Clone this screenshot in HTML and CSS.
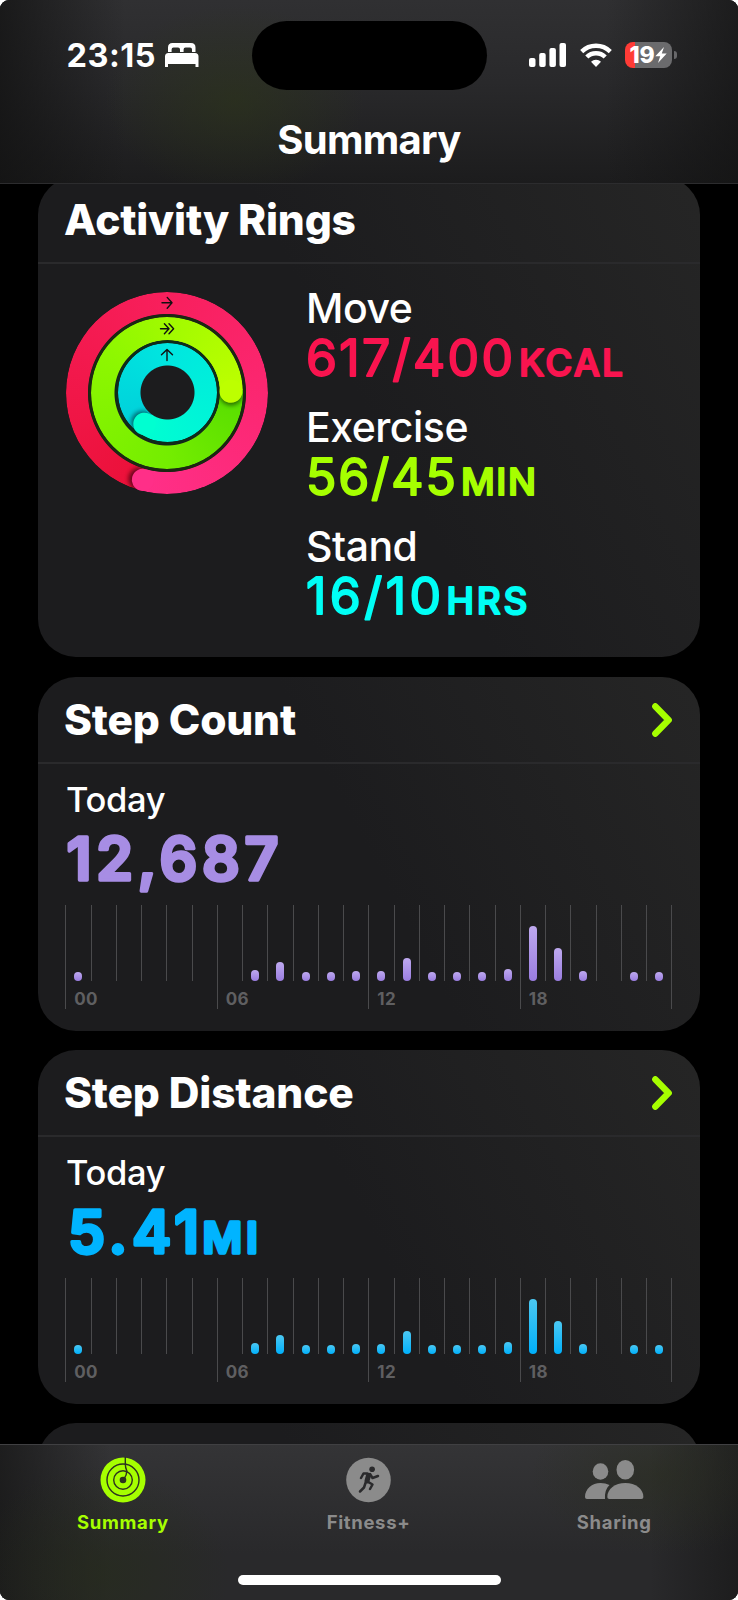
FILE: index.html
```html
<!DOCTYPE html>
<html lang="en">
<head>
<meta charset="utf-8">
<title>Summary</title>
<link rel="stylesheet" href="styles.css">
</head>
<body>
<div class="phone">
  <header class="top">
    <div class="status">
      <div class="status-left">
        <span class="clock">23:15</span>
        <svg class="bed" width="34" height="24" viewBox="0 0 34 24"><path fill="#fff" d="M3 9V4.500Q3 0 7.500 0H26Q30.500 0 30.500 4.500V9H27V6.500Q27 4.600 25 4.600H20.500Q18.600 4.600 18.600 6.500V9H15V6.500Q15 4.600 13 4.600H8.500Q6.600 4.600 6.600 6.500V9ZM0 13.500Q0 10 3.500 10H30Q33.500 10 33.500 13.500V24H30.500V21H3V24H0Z"/></svg>
      </div>
      <div class="island"></div>
      <div class="status-right">
        <svg width="37" height="24" viewBox="0 0 37 24" fill="#fff"><rect y="15" width="6.500" height="9" rx="2"/><rect x="10.200" y="10" width="6.500" height="14" rx="2"/><rect x="20.400" y="5" width="6.500" height="19" rx="2"/><rect x="30.500" width="6.500" height="24" rx="2"/></svg>
        <svg width="32" height="24" viewBox="0 0 32 24"><g fill="none" stroke="#fff" stroke-width="4.400"><path d="M1.700 8.600A20.500 20.500 0 0 1 30.300 8.600"/><path d="M6.800 14A13 13 0 0 1 25.200 14"/></g><path fill="#fff" d="M11 18.700A7.200 7.200 0 0 1 21 18.700L16 24Z"/></svg>
        <div class="battery"><span class="charge">19</span><svg class="bolt" width="12" height="16" viewBox="0 0 12 16"><path fill="#fff" d="M9 0 .3 9.300H5.200L3 16 11.700 6.600H6.800Z"/></svg></div>
      </div>
    </div>
    <h1 class="title">Summary</h1>
  </header>

  <main class="cards">
    <section class="card rings-card">
      <h2 class="card-head">Activity Rings</h2>
      <div class="rings-body">
        <div class="rings">
          <div class="ring move"></div>
          <div class="ring exercise"></div>
          <div class="ring stand"></div>
          <svg class="ring-ends" width="204" height="204" viewBox="-102 -102 204 204">
            <defs>
              <filter id="soft" x="-50%" y="-50%" width="200%" height="200%"><feGaussianBlur stdDeviation="2.200"/></filter>
              <clipPath id="c1"><path d="M0-101.300A101.300 101.300 0 0 1 101.300 0H79A79 79 0 0 0 0-79Z"/></clipPath>
              <clipPath id="c2"><path d="M0-75.500A75.500 75.500 0 0 1 75.500 0H52.500A52.500 52.500 0 0 0 0-52.500Z"/></clipPath>
              <clipPath id="c3"><path d="M0-49.500A49.500 49.500 0 0 1 49.500 0H27A27 27 0 0 0 0-27Z"/></clipPath>
            </defs>
            <g transform="rotate(195.500)"><g clip-path="url(#c1)"><circle cx="3" cy="-90.100" r="11.500" fill="#300010" opacity=".7" filter="url(#soft)"/></g><circle cy="-90.150" r="11.150" fill="#ff2f88"/></g>
            <g transform="rotate(88.500)"><g clip-path="url(#c2)"><circle cx="2.500" cy="-64" r="11.500" fill="#103000" opacity=".65" filter="url(#soft)"/></g><circle cy="-64" r="11.500" fill="#bdff00"/></g>
            <g transform="rotate(216)"><g clip-path="url(#c3)"><circle cx="2.500" cy="-38.200" r="11.500" fill="#003038" opacity=".65" filter="url(#soft)"/></g><circle cy="-38.250" r="11.250" fill="#00ffd1"/></g>
            <g fill="none" stroke="#101010" stroke-width="1.400" stroke-linecap="round" stroke-linejoin="round">
              <path d="M-5-90.200H5M.2-95.600 5-90.200.2-84.800"/>
              <path d="M-6.500-64.200H1.800M-2.600-69.200 2-64.200-2.600-59.200M2-69.200 6.600-64.200 2-59.200"/>
              <path d="M0-32.500V-43.600M-5.500-38.200 0-43.600 5.500-38.200"/>
            </g>
          </svg>
        </div>
        <div class="goals">
          <div class="goal"><div class="goal-name">Move</div>
            <svg class="num" width="340" height="52"><g fill="#f9144f" stroke="#f9144f"><text x="0" y="41" textLength="207">617/400</text><text class="unit" x="213" y="41" textLength="104">KCAL</text></g></svg></div>
          <div class="goal"><div class="goal-name">Exercise</div>
            <svg class="num" width="340" height="52"><g fill="#a6ff00" stroke="#a6ff00"><text x="0" y="41" textLength="150">56/45</text><text class="unit" x="155" y="41" textLength="75">MIN</text></g></svg></div>
          <div class="goal"><div class="goal-name">Stand</div>
            <svg class="num" width="340" height="52"><g fill="#00fff6" stroke="#00fff6"><text x="0" y="41" textLength="135">16/10</text><text class="unit" x="140.500" y="41" textLength="81">HRS</text></g></svg></div>
        </div>
      </div>
    </section>

    <section class="card">
      <h2 class="card-head"><span>Step Count</span><svg width="20" height="34" viewBox="0 0 20 34"><path class="chev" d="M3.400 3.400 16.600 17 3.400 30.600"/></svg></h2>
      <div class="metric">
        <div class="today">Today</div>
        <svg class="big" width="400" height="66"><text x="1.500" y="52" fill="#a78de4" stroke="#a78de4" textLength="212">12,687</text></svg>
        <div class="chart steps"></div>
      </div>
    </section>

    <section class="card">
      <h2 class="card-head"><span>Step Distance</span><svg width="20" height="34" viewBox="0 0 20 34"><path class="chev" d="M3.400 3.400 16.600 17 3.400 30.600"/></svg></h2>
      <div class="metric">
        <div class="today">Today</div>
        <svg class="big" width="400" height="66"><g fill="#00b4ff" stroke="#00b4ff"><text x="3" y="52" textLength="131">5.41</text><text class="big-unit" x="137.500" y="52" textLength="55.500">MI</text></g></svg>
        <div class="chart distance"></div>
      </div>
    </section>

    <section class="card next-card"></section>
  </main>

  <nav class="tabs">
    <div class="tab-row">
      <a class="tab active">
        <svg width="46" height="46" viewBox="-23 -23 46 46"><circle r="22.500" fill="#a6ff00"/><g fill="none" stroke="#2c3220" stroke-width="1.400"><circle r="16"/><circle r="9.300"/><path d="M2.300-23V-16Q2.300-12.500 3.800-9.300Q3.800-5 1-1"/></g><circle r="3.300" fill="#2c3220"/></svg>
        <span>Summary</span>
      </a>
      <a class="tab">
        <svg width="46" height="46" viewBox="-22.500 -23 46 46"><circle r="22.300" fill="#8b8b8b"/><circle cx="3.600" cy="-10.800" r="2.800" fill="#2a2a2c"/><g fill="none" stroke="#2a2a2c" stroke-linecap="round" stroke-linejoin="round"><path stroke-width="5" d="M0-4.500-1.500 1"/><path stroke-width="2.500" d="M-1-6.500H-5L-7.500-2M1.500-6 4-2 9.500-4M-1 1.500 4 4.500 1.500 9M-3 3-4.500 7.500-8.500 11.500"/></g></svg>
        <span>Fitness+</span>
      </a>
      <a class="tab">
        <svg width="60" height="46" viewBox="0 0 60 46" fill="#8b8b8b"><ellipse cx="16.500" cy="14.500" rx="7.800" ry="8.300"/><ellipse cx="41.300" cy="12.800" rx="8.800" ry="9.800"/><path d="M25.500 28C22 31.500 20.500 36 21 42H3Q1 42 1 40C1 32 8 26 16.500 26Q21.500 26 25.500 28Z"/><path d="M23.300 40C23.300 32 31 26 41.300 26S59.400 32 59.400 40Q59.400 42 57.400 42H25.300Q23.300 42 23.300 40Z"/></svg>
        <span>Sharing</span>
      </a>
    </div>
    <div class="home"></div>
  </nav>
</div>
<script src="chart.js"></script>
</body>
</html>
```
FILE: styles.css
```css
* { box-sizing: border-box; }
html { background: #fff; }
body { margin: 0; font-family: Inter, "Liberation Sans", sans-serif; color: #fff; }
.phone { width: 738px; height: 1600px; display: flex; flex-direction: column; background: #000; border-radius: 9px; overflow: hidden; }

.top {
  height: 184px; flex: none; border-bottom: 1px solid #2c2c2e;
  background:
    radial-gradient(ellipse 130px 95px at 235px 100px, rgba(45,54,24,.55), rgba(45,54,24,0)),
    linear-gradient(90deg, rgba(18,18,18,.75), rgba(18,18,18,0) 17%, rgba(18,18,18,0) 82%, rgba(18,18,18,.65)),
    linear-gradient(#303032, #29292b 45%, #1c1c1d);
}
.status { display: grid; grid-template-columns: 252px 235px 1fr; padding-top: 21px; height: 91px; }
.status-left { display: flex; gap: 9px; padding: 22px 0 0 66.500px; }
.clock { font-size: 32.500px; font-weight: 750; line-height: 25px; letter-spacing: .5px; width: 89.500px; white-space: nowrap; }
.bed { flex: none; }
.island { height: 69px; background: #000; border-radius: 35px; }
.status-right { display: flex; gap: 14px; padding: 22px 0 0 42px; }
.battery { position: relative; width: 47px; height: 26px; margin-top: -1px; margin-left: -1px; border-radius: 8px; background: linear-gradient(90deg, #ff3b36 10px, #6b6b6d 10px); display: flex; align-items: center; justify-content: center; gap: 1px; }
.battery::after { content: ""; position: absolute; left: 49px; top: 9px; width: 3px; height: 8px; border-radius: 0 4px 4px 0; background: #68686a; }
.charge { font-size: 23px; font-weight: 800; letter-spacing: -.3px; line-height: 26px; }
.bolt { flex: none; }
.title { margin: 25px 0 0; text-align: center; font-size: 40px; line-height: 48px; font-weight: 750; letter-spacing: -.7px; }

.cards { height: 1260px; flex: none; overflow: hidden; padding: 0 38px; }
.card { height: 353.600px; margin-bottom: 19.600px; border-radius: 38px; background: linear-gradient(62deg, #1c1c1e 50%, #252525 98%); overflow: hidden; }
.rings-card { height: 480.600px; margin-top: -7.200px; }
.card-head { height: 87px; margin: 0; padding: 0 28px 0 26px; display: flex; align-items: center; justify-content: space-between; border-bottom: 2px solid #2a2a2c; font-size: 42.500px; font-weight: 800; letter-spacing: -.2px; }
.chev { fill: none; stroke: #a6ff00; stroke-width: 6.500; stroke-linecap: round; stroke-linejoin: round; }

.rings-body { display: flex; padding: 27px 0 0 27px; }
.rings { width: 204px; height: 204px; display: grid; flex: none; place-items: center; }
.ring, .ring-ends { grid-area: 1 / 1; }
.ring-ends { z-index: 1; }
.ring { border-radius: 50%; }
.move { width: 202.600px; height: 202.600px; background: conic-gradient(from 195deg, #eb1038, #f81f5c 45%, #ff2f88); -webkit-mask: radial-gradient(circle, transparent 78.500px, #000 79.500px); mask: radial-gradient(circle, transparent 78.500px, #000 79.500px); }
.exercise { width: 158px; height: 158px; border: 3.500px solid #1b2812; background: conic-gradient(from 88deg, #57dd00, #74ed00 25%, #8ef700 60%, #bdff00) border-box; background-clip: padding-box; -webkit-mask: radial-gradient(circle, transparent 52px, #000 53px); mask: radial-gradient(circle, transparent 52px, #000 53px); }
.stand { width: 105px; height: 105px; border: 3px solid #0e2c1a; background: conic-gradient(from 216deg, #00cfda, #00e6e0 40%, #00ffd1); background-clip: padding-box; -webkit-mask: radial-gradient(circle, transparent 26.500px, #000 27.500px); mask: radial-gradient(circle, transparent 26.500px, #000 27.500px); }
.goals { margin: -4px 0 0 37px; }
.goal { height: 119.200px; }
.goal-name { font-size: 41px; line-height: 43px; font-weight: 550; letter-spacing: -.5px; margin-bottom: 5px; }
.num { display: block; font-size: 50px; font-weight: 400; overflow: visible; }
.num text, .big text { stroke-linejoin: round; stroke-width: 1.900; }
.num .unit { font-size: 37px; font-weight: 500; }

.metric { padding: 16px 0 0 27px; }
.today { font-size: 34.500px; line-height: 40px; font-weight: 500; letter-spacing: -.3px; padding-left: 1px; }
.big { display: block; margin-top: 8px; font-size: 59px; font-weight: 600; overflow: visible; }
.big text { stroke-width: 3.400; }
.big .big-unit { font-size: 43px; font-weight: 600; }

.chart { display: grid; grid-template-columns: repeat(24, 25.250px) 2px; height: 104px; margin: 11px 0 0 .3px; }
.hour { height: 76px; border-left: 1px solid #4a4a4c; padding-left: 8px; display: flex; align-items: flex-end; }
.hour.major { height: 104px; flex-direction: column; align-items: flex-start; justify-content: flex-end; }
.bar { width: 8px; border-radius: 4px; flex: none; }
.steps .bar { background: linear-gradient(#bea9ef, #9a7de0); }
.distance .bar { background: linear-gradient(#4cc8f2, #00b0fb); }
.label { height: 28px; padding-top: 8px; font-size: 17px; line-height: 20px; font-weight: 700; color: #5f5f61; letter-spacing: .3px; }

.tabs { height: 156px; flex: none; border-top: 1px solid #404042; display: flex; flex-direction: column; align-items: center;
  background:
    radial-gradient(ellipse 130px 110px at 100px 130px, rgba(38,44,26,.6), rgba(38,44,26,0)),
    radial-gradient(ellipse 130px 80px at 660px 30px, rgba(40,44,28,.5), rgba(40,44,28,0)),
    linear-gradient(90deg, rgba(24,24,24,.8), rgba(24,24,24,0) 15%, rgba(24,24,24,0) 88%, rgba(24,24,24,.7)),
    linear-gradient(#343436, #29292b 70%);
}
.tab-row { display: grid; grid-template-columns: repeat(3, 245.700px); width: 738px; height: 130px; padding-top: 12px; }
.tab { display: flex; flex-direction: column; align-items: center; gap: 8px; color: #8b8b8b; font-size: 18.500px; line-height: 22px; font-weight: 650; letter-spacing: .65px; }
.active { color: #a6ff00; }
.home { width: 263px; height: 10px; border-radius: 5px; background: #fff; }
```
FILE: chart.js
```js
const heights = [9, 0, 0, 0, 0, 0, 0, 11, 19.5, 9, 9, 10, 10.5, 23, 9, 9, 9, 12.5, 55, 33, 10.5, 0, 9, 9, 0];
document.querySelectorAll('.chart').forEach(chart => {
  heights.forEach((h, i) => {
    const hour = document.createElement('div');
    hour.className = i % 6 ? 'hour' : 'hour major';
    if (h) {
      const bar = document.createElement('div');
      bar.className = 'bar';
      bar.style.height = h + 'px';
      hour.append(bar);
    }
    if (i % 6 === 0) {
      const label = document.createElement('span');
      label.className = 'label';
      label.textContent = i < 24 ? String(i).padStart(2, '0') : '';
      hour.append(label);
    }
    chart.append(hour);
  });
});
```
